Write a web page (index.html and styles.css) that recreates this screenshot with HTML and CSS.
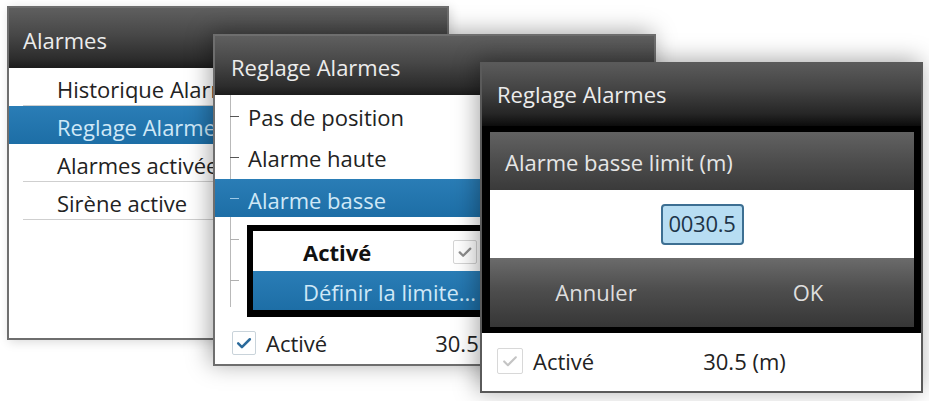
FILE: index.html
```html
<!DOCTYPE html>
<html lang="fr">
<head>
<meta charset="utf-8">
<title>Alarmes</title>
<link rel="stylesheet" href="styles.css">
</head>
<body>
<div class="desk">
  <section class="win win1">
    <header class="title">Alarmes</header>
    <ul class="menu">
      <li class="item">Historique Alarmes</li>
      <li class="item sel">Reglage Alarmes</li>
      <li class="item">Alarmes activées</li>
      <li class="item">Sirène active</li>
    </ul>
  </section>

  <section class="win win2">
    <header class="title">Reglage Alarmes</header>
    <div class="tree">
      <div class="node">Pas de position</div>
      <div class="node">Alarme haute</div>
      <div class="node sel">Alarme basse</div>
      <div class="node sub"></div>
      <div class="node sub"></div>
    </div>
    <div class="status">
      <span class="check on"><svg viewBox="0 0 24 24"><path d="M5 12.5l4.5 4.5L19 7.5"/></svg></span>
      <span class="label">Activé</span>
      <span class="value v2">30.5 (m)</span>
    </div>
    <div class="popup">
      <div class="pop-row">
        <span class="pop-label">Activé</span>
        <span class="check pop"><svg viewBox="0 0 24 24"><path d="M5 12.5l4.5 4.5L19 7.5"/></svg></span>
      </div>
      <div class="pop-row pop-sel">Définir la limite...</div>
    </div>
  </section>

  <section class="win win3">
    <header class="title t3">Reglage Alarmes</header>
    <div class="dlg">
      <div class="dlg-title">Alarme basse limit (m)</div>
      <div class="dlg-body"><span class="field">0030.5</span></div>
      <div class="dlg-btns">
        <span class="btn">Annuler</span>
        <span class="btn">OK</span>
      </div>
    </div>
    <div class="status s3">
      <span class="check off"><svg viewBox="0 0 24 24"><path d="M5 12.5l4.5 4.5L19 7.5"/></svg></span>
      <span class="label">Activé</span>
      <span class="value v3">30.5 (m)</span>
    </div>
  </section>
</div>
</body>
</html>
```

FILE: styles.css
```css
* { box-sizing: border-box; margin: 0; padding: 0; }

html, body {
  width: 929px;
  height: 401px;
  overflow: hidden;
  background: #fff;
}

body {
  font-family: "Open Sans", "DejaVu Sans", sans-serif;
  font-size: 22px;
  font-weight: 500;
  color: #222;
}

.desk {
  position: relative;
  width: 929px;
  height: 401px;
}

/* ---------- windows ---------- */
.win {
  position: absolute;
  display: flex;
  flex-direction: column;
  background: #fff;
  border: 2px solid #6e6e6e;
  box-shadow: -3px -2px 22px rgba(0, 0, 0, 0.35);
}

.win1 { left: 7px;   top: 6px;  width: 442px; height: 334px; z-index: 1; box-shadow: 2px 2px 10px rgba(0,0,0,0.15); }
.win2 { left: 213px; top: 34px; width: 443px; height: 332px; z-index: 2; }
.win3 { left: 480px; top: 62px; width: 443px; height: 331px; z-index: 3; border-color: #5a5a5a; }

.title {
  flex: none;
  display: flex;
  align-items: center;
  color: #ececec;
  background: linear-gradient(#5f5f5f 0%, #474747 45%, #2c2c2c 85%, #1c1c1c 100%);
  white-space: nowrap;
}

.win1 .title { height: 60px; padding: 4px 0 0 14px; }
.win2 .title { height: 59px; padding: 2px 0 0 16px; }
.win3 .title { height: 62px; padding: 0 0 2px 15px;
  background: linear-gradient(#5a5a5a 0%, #444 40%, #262626 80%, #0c0c0c 100%); }

/* ---------- window 1 menu ---------- */
.menu { list-style: none; }

.item {
  height: 38px;
  display: flex;
  align-items: center;
  padding: 4px 0 0 48px;
  white-space: nowrap;
  overflow: hidden;
  background: linear-gradient(#cfcfcf, #cfcfcf) no-repeat 14px 100% / calc(100% - 14px) 1px;
}

.item.sel,
.node.sel,
.pop-sel {
  background: linear-gradient(#2a7db6, #1d6ea6);
  color: #cfe8f7;
}

/* ---------- window 2 tree ---------- */
.tree {
  position: relative;
  flex: 1;
}

.tree::before {
  content: "";
  position: absolute;
  left: 15px;
  top: 0;
  height: 212px;
  width: 1px;
  background: #b9b9b9;
}

.node {
  position: relative;
  height: 41px;
  display: flex;
  align-items: center;
  padding: 3px 0 0 33px;
  white-space: nowrap;
}

.node::before {
  content: "";
  position: absolute;
  left: 15px;
  top: 50%;
  width: 9px;
  height: 1px;
  background: #555;
}

.node.sel {
  height: 38px;
  margin: 2px 0 1px;
  z-index: 1;
}

.node.sel::before { background: #9cc8e6; }

.node.sub::before { background: #b0b0b0; }

/* ---------- status rows ---------- */
.status {
  flex: none;
  display: flex;
  align-items: center;
  white-space: nowrap;
}

.win2 .status { height: 42px; padding-left: 17px; }
.s3 { height: 57px; padding: 0 0 2px 15px; }

.label { margin-left: 10px; }
.v2 { margin-left: 108px; }
.v3 { margin-left: 109px; }

/* ---------- checkboxes ---------- */
.check {
  flex: none;
  width: 24px;
  height: 24px;
  display: flex;
  align-items: center;
  justify-content: center;
  border: 1px solid #c9d3da;
  border-radius: 2px;
  background: #fff;
}

.check svg { width: 20px; height: 20px; fill: none; stroke-width: 3; stroke-linecap: round; stroke-linejoin: round; }
.check.on svg { stroke: #2b6a9b; }
.check.pop { border-color: #d4d4d4; }
.check.pop svg { stroke: #8c8c8c; width: 18px; height: 18px; }
.check.off { width: 26px; height: 26px; border-color: #d8d8d8; }
.check.off svg { stroke: #c4c4c4; stroke-width: 2.5; }

/* ---------- popup (context menu) ---------- */
.popup {
  position: absolute;
  left: 32px;
  top: 189px;
  width: 252px;
  height: 92px;
  border: solid #000;
  border-width: 6px 6px 7px 6px;
  background: #fff;
  z-index: 2;
}

.pop-row {
  height: 40px;
  display: flex;
  align-items: center;
  padding: 2px 0 0 50px;
  white-space: nowrap;
}

.pop-label { font-weight: 700; color: #111; width: 150px; }

.pop-sel { height: 39px; }

/* ---------- window 3 dialog ---------- */
.dlg {
  flex: none;
  background: #000;
  padding: 6px 7px 6px 8px;
  display: flex;
  flex-direction: column;
}

.dlg-title {
  height: 58px;
  display: flex;
  align-items: center;
  padding: 2px 0 0 15px;
  color: #e6e6e6;
  background: linear-gradient(#626262, #4d4d4d 50%, #3a3a3a);
}

.dlg-body {
  height: 68px;
  display: flex;
  align-items: center;
  justify-content: center;
  background: #fff;
}

.field {
  width: 83px;
  height: 41px;
  display: flex;
  align-items: center;
  justify-content: center;
  border: 2px solid #3d6f92;
  border-radius: 4px;
  background: #b7ddf2;
  color: #1d3448;
  padding-bottom: 2px;
  letter-spacing: -0.3px;
}

.dlg-btns {
  height: 69px;
  display: grid;
  grid-template-columns: 1fr 1fr;
  background: linear-gradient(#6b6b6b, #4e4e4e 45%, #363636);
}

.btn {
  display: flex;
  align-items: center;
  justify-content: center;
  color: #dedede;
  padding-bottom: 2px;
}
```
